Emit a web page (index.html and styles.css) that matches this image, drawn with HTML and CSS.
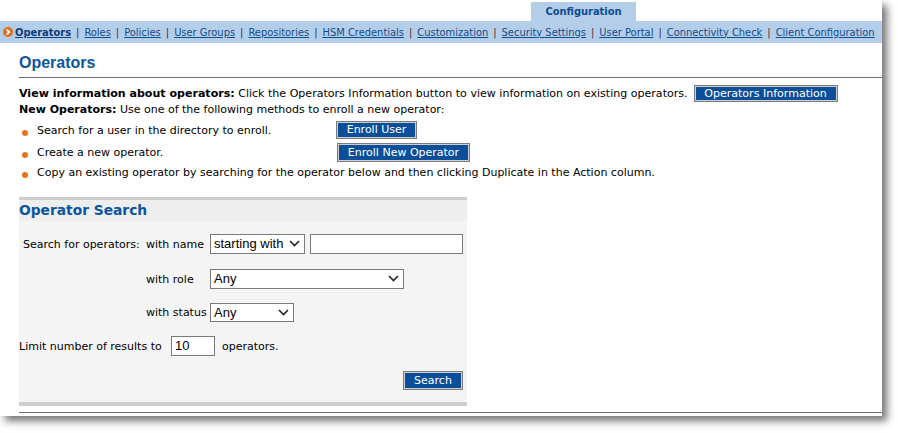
FILE: index.html
```html
<!DOCTYPE html>
<html>
<head>
<meta charset="utf-8">
<link rel="stylesheet" href="styles.css">
</head>
<body>
<div class="window">
  <div class="tabrow"><div class="tab">Configuration</div></div>
  <nav class="nav">
    <svg class="navicon" width="10" height="10" viewBox="0 0 10 10"><circle cx="5" cy="5" r="5" fill="#e46c1a"/><path d="M3.6 2.4 L6.2 5 L3.6 7.6" fill="none" stroke="#fff" stroke-width="1.8"/></svg>
    <a class="cur">Operators</a><span class="sep">|</span>
    <a>Roles</a><span class="sep">|</span>
    <a>Policies</a><span class="sep">|</span>
    <a>User Groups</a><span class="sep">|</span>
    <a>Repositories</a><span class="sep">|</span>
    <a>HSM Credentials</a><span class="sep">|</span>
    <a>Customization</a><span class="sep">|</span>
    <a>Security Settings</a><span class="sep">|</span>
    <a>User Portal</a><span class="sep">|</span>
    <a>Connectivity Check</a><span class="sep">|</span>
    <a>Client Configuration</a>
  </nav>
  <main class="main">
    <h1 class="title">Operators</h1>
    <div class="line1"><span><b>View information about operators:</b> Click the Operators Information button to view information on existing operators.</span><span class="btn btn-info">Operators Information</span></div>
    <div class="line2"><b>New Operators:</b> Use one of the following methods to enroll a new operator:</div>
    <ul class="methods">
      <li class="m m1"><span class="dot"></span><span class="mtext">Search for a user in the directory to enroll.</span><span class="btn btn-eu">Enroll User</span></li>
      <li class="m m2"><span class="dot"></span><span class="mtext">Create a new operator.</span><span class="btn btn-en">Enroll New Operator</span></li>
      <li class="m m3"><span class="dot"></span><span class="mtext">Copy an existing operator by searching for the operator below and then clicking Duplicate in the Action column.</span></li>
    </ul>
    <section class="panel">
      <h2 class="phead">Operator Search</h2>
      <div class="pbody">
        <div class="frow r1">
          <span class="lbl0">Search for operators:</span>
          <span class="lbl">with name</span>
          <div class="sel s-name"><span>starting with</span><svg width="11" height="7" viewBox="0 0 11 7"><path d="M1 1 L5.5 5.5 L10 1" fill="none" stroke="#222" stroke-width="1.6"/></svg></div>
          <div class="inp i-name"></div>
        </div>
        <div class="frow r2">
          <span class="lbl0"></span>
          <span class="lbl">with role</span>
          <div class="sel s-role"><span>Any</span><svg width="11" height="7" viewBox="0 0 11 7"><path d="M1 1 L5.5 5.5 L10 1" fill="none" stroke="#222" stroke-width="1.6"/></svg></div>
        </div>
        <div class="frow r3">
          <span class="lbl0"></span>
          <span class="lbl">with status</span>
          <div class="sel s-status"><span>Any</span><svg width="11" height="7" viewBox="0 0 11 7"><path d="M1 1 L5.5 5.5 L10 1" fill="none" stroke="#222" stroke-width="1.6"/></svg></div>
        </div>
        <div class="frow r4">
          <span class="lbl4">Limit number of results to</span>
          <div class="inp i-limit">10</div>
          <span class="lbl5">operators.</span>
        </div>
        <div class="srow"><span class="btn btn-search">Search</span></div>
      </div>
    </section>
    <div class="endrule"></div>
  </main>
</div>
</body>
</html>
```

FILE: styles.css
```css
* { box-sizing: border-box; }
html, body { margin: 0; padding: 0; background: #fff; }
body {
  width: 898px;
  height: 433px;
  overflow: hidden;
  font-family: "DejaVu Sans", sans-serif;
  font-size: 11px;
  color: #000;
}
.window {
  width: 882px;
  height: 416px;
  background: #fff;
  box-shadow: 5px 5px 8px rgba(0, 0, 0, 0.55);
  overflow: hidden;
}
.tabrow { height: 21px; padding-top: 2px; }
.tab {
  margin-left: 531px;
  width: 105px;
  height: 19px;
  background: #b4cde9;
  color: #0d4d8f;
  font-family: "DejaVu Sans Condensed", "DejaVu Sans", sans-serif;
  font-weight: bold;
  text-align: center;
  line-height: 19px;
}
.nav {
  height: 22px;
  background: #b4cde9;
  display: flex;
  align-items: center;
  padding-left: 3px;
  white-space: nowrap;
  font-family: "DejaVu Sans Condensed", "DejaVu Sans", sans-serif;
}
.navicon { margin-right: 2px; flex: none; }
.nav a { color: #124e8e; text-decoration: underline; }
.nav a.cur { font-weight: bold; color: #0d3f7c; }
.sep { color: #333; margin: 0 5px; }
.main { padding-left: 19px; }
.title {
  margin: 0;
  height: 35px;
  padding-top: 10px;
  font-family: "Liberation Sans", Arial, sans-serif;
  font-size: 16px;
  font-weight: bold;
  color: #0b559f;
  border-bottom: 1px solid #6f6f6f;
  line-height: 20px;
}
.line1 {
  display: flex;
  align-items: center;
  height: 18px;
  margin-top: 6px;
  gap: 6px;
  white-space: nowrap;
  font-size: 11.05px;
}
.line2 { height: 16px; line-height: 16px; white-space: nowrap; }
.btn {
  display: inline-block;
  background: #0b4f9b;
  color: #fff;
  border: 1px solid #7a7a7a;
  box-shadow: inset 0 0 0 1px #cfcfcf;
  text-align: center;
  white-space: nowrap;
}
.btn-info { width: 144px; height: 17px; line-height: 15px; }
.methods { list-style: none; margin: 0; padding: 0; }
.m {
  display: grid;
  grid-template-columns: 18px 299px auto;
  align-items: center;
}
.m1 { height: 20px; margin-top: 2px; }
.m2 { height: 20px; margin-top: 2px; }
.m3 { height: 18px; margin-top: 1px; }
.dot {
  width: 6px;
  height: 6px;
  border-radius: 50%;
  background: #e8731c;
  margin-left: 3px;
  margin-top: 6px;
}
.mtext { white-space: nowrap; }
.btn-eu { width: 81px; height: 18px; line-height: 16px; }
.btn-en { width: 133px; height: 19px; line-height: 17px; margin-left: 1px; }
.m3 .mtext { grid-column: 2 / 4; }
.panel {
  width: 448px;
  margin-top: 16px;
  border-top: 3px solid #cecece;
  border-bottom: 4px solid #cecece;
  background: #f4f4f4;
}
.phead {
  margin: 0;
  height: 21px;
  line-height: 21px;
  background: #eeeeee;
  font-family: "DejaVu Sans", sans-serif;
  font-size: 13.8px;
  font-weight: bold;
  color: #0b559f;
}
.pbody { padding: 13px 4px 12px 0; }
.frow { display: flex; align-items: center; height: 20px; white-space: nowrap; }
.r2 { margin-top: 15px; }
.r3 { margin-top: 14px; height: 19px; }
.r4 { margin-top: 14px; }
.lbl0 { width: 127px; padding-left: 4px; flex: none; }
.lbl { width: 64px; flex: none; }
.sel {
  display: flex;
  align-items: center;
  justify-content: space-between;
  height: 100%;
  background: #fff;
  border: 1px solid #7a7a7a;
  padding: 0 4px 1px 3px;
  font-family: "Liberation Sans", Arial, sans-serif;
  font-size: 13px;
}
.s-name { width: 95px; }
.s-role { width: 194px; }
.s-status { width: 84px; }
.inp {
  height: 100%;
  background: #fff;
  border: 1px solid #7a7a7a;
  font-family: "Liberation Sans", Arial, sans-serif;
  font-size: 13px;
  line-height: 17px;
  padding-left: 3px;
}
.i-name { width: 153px; margin-left: 5px; }
.lbl4 { width: 152px; flex: none; }
.i-limit { width: 44px; }
.lbl5 { margin-left: 7px; }
.srow { display: flex; justify-content: flex-end; margin-top: 15px; }
.btn-search { width: 60px; height: 19px; line-height: 17px; }
.endrule {
  margin-top: 6px;
  border-top: 1px solid #6f6f6f;
}
```
